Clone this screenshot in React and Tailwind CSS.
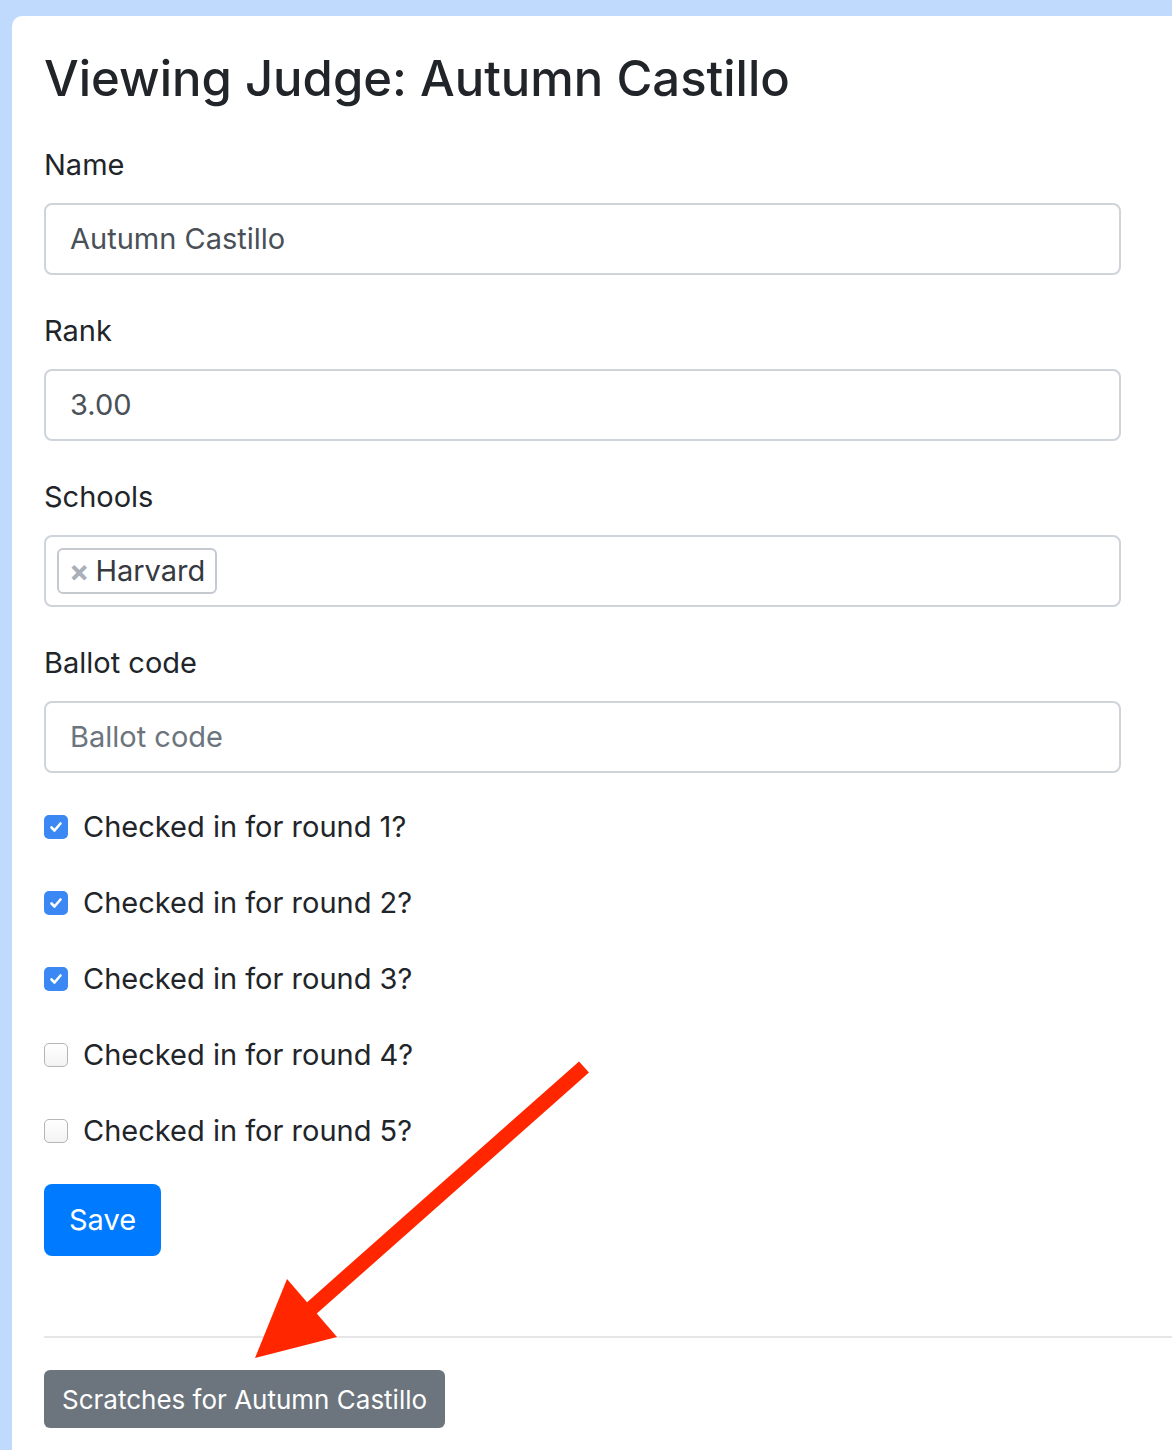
import React from "react";

const font = { fontFamily: "Inter, 'Noto Sans', sans-serif" };

function Field({ label, children }) {
  return (
    <div className="flex flex-col">
      <label className="text-[29px] leading-[40px] text-[#212529] mb-[18px]">{label}</label>
      {children}
    </div>
  );
}

function Check({ n, checked }) {
  return (
    <div className="flex items-center h-[40px]">
      {checked ? (
        <span className="w-[24px] h-[24px] rounded-[5px] bg-[#3b88f5] flex items-center justify-center">
          <svg width="16" height="16" viewBox="0 0 16 16" fill="none">
            <path d="M3.5 8.5l3 3 6-7" stroke="white" strokeWidth="2.6" strokeLinecap="round" strokeLinejoin="round" />
          </svg>
        </span>
      ) : (
        <span className="w-[24px] h-[24px] rounded-[5px] border border-[#b5b5b5] bg-gradient-to-b from-white to-[#f3f3f3]" />
      )}
      <span className="ml-[15px] text-[29px] text-[#212529]">Checked in for round {n}?</span>
    </div>
  );
}

export default function App() {
  return (
    <div className="w-[1172px] h-[1450px] overflow-hidden bg-[#bfdafc] pt-[16px] pl-[12px] relative" style={font}>
      <div className="w-[1250px] h-[1500px] bg-white rounded-tl-[10px] pl-[32px] pt-[33px]">
        <div className="w-[1077px] flex flex-col">
          <h1 className="text-[49px] leading-[60px] font-medium text-[#212529] mb-[36px]">
            Viewing Judge: Autumn Castillo
          </h1>

          <div className="flex flex-col gap-[36px]">
            <Field label="Name">
              <div className="h-[72px] border-2 border-[#ced4da] rounded-[8px] px-[24px] flex items-center text-[29px] text-[#495057]">
                Autumn Castillo
              </div>
            </Field>
            <Field label="Rank">
              <div className="h-[72px] border-2 border-[#ced4da] rounded-[8px] px-[24px] flex items-center text-[29px] text-[#495057]">
                3.00
              </div>
            </Field>
            <Field label="Schools">
              <div className="h-[72px] border-2 border-[#ced4da] rounded-[8px] px-[11px] flex items-center">
                <span className="h-[46px] border-2 border-[#c5cad1] rounded-[6px] pl-[10px] pr-[10px] flex items-center">
                  <span className="text-[30px] leading-none font-bold text-[#a9b0ba] mr-[6px]">×</span>
                  <span className="text-[29px] text-[#343a40]">Harvard</span>
                </span>
              </div>
            </Field>
            <Field label="Ballot code">
              <div className="h-[72px] border-2 border-[#ced4da] rounded-[8px] px-[24px] flex items-center text-[29px] text-[#6c757d]">
                Ballot code
              </div>
            </Field>
          </div>

          <div className="flex flex-col gap-[36px] mt-[34px]">
            <Check n={1} checked />
            <Check n={2} checked />
            <Check n={3} checked />
            <Check n={4} />
            <Check n={5} />
          </div>

          <div className="mt-[33px]">
            <button className="h-[72px] px-[25px] bg-[#007bff] text-white text-[29px] rounded-[8px]">Save</button>
          </div>
        </div>

        <hr className="mt-[80px] border-t-2 border-[#e6e6e6]" />

        <div className="mt-[32px]">
          <button className="h-[58px] px-[18px] bg-[#6c757d] text-white text-[26px] rounded-[6px]">
            Scratches for Autumn Castillo
          </button>
        </div>
      </div>

      <svg className="absolute left-0 top-0 pointer-events-none" width="1172" height="1450" viewBox="0 0 1172 1450">
        <line x1="584" y1="1067" x2="305" y2="1314" stroke="#ff2600" strokeWidth="15" />
        <polygon points="287,1279 337,1337 255,1358" fill="#ff2600" />
      </svg>
    </div>
  );
}
